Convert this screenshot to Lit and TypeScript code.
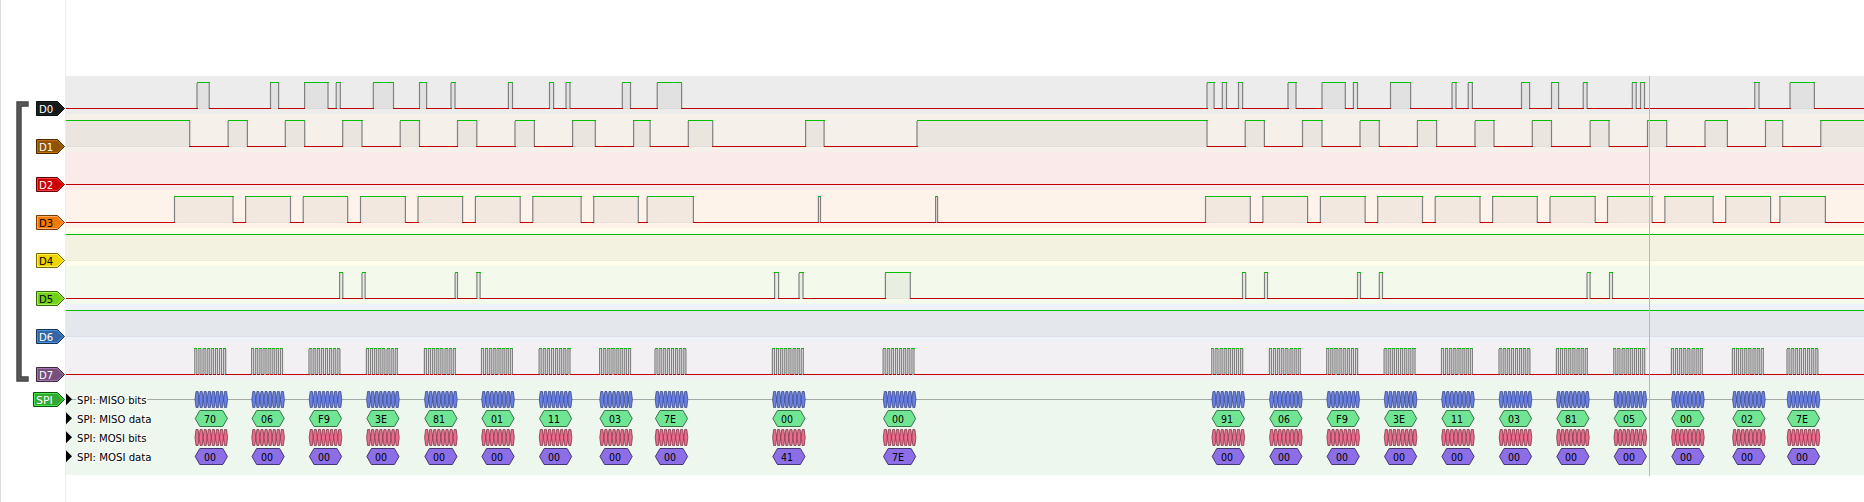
import { LitElement, html, svg, css } from "lit";
import { customElement, property } from "lit/decorators.js";

interface Channel {
  name: string;
  band: string;
  fill: string;
  edge: string;
  light: string;
  text: string;
  startsHigh: boolean;
  edges: number[];
}

const LEFT = 66;
const RIGHT = 1864;

/** Start x, MISO byte, MOSI byte of every SPI transfer. */
const TRANSFERS: [number, string, string][] = [
  [194.8, "70", "00"], [251.6, "06", "00"], [309, "F9", "00"], [366.4, "3E", "00"],
  [424.4, "81", "00"], [481.5, "01", "00"], [539.1, "11", "00"], [599.6, "03", "00"],
  [655, "7E", "00"], [772.4, "00", "41"], [883.1, "00", "7E"], [1211.8, "91", "00"],
  [1269.4, "06", "00"], [1326.7, "F9", "00"], [1384.1, "3E", "00"], [1441.5, "11", "00"],
  [1499, "03", "00"], [1556.4, "81", "00"], [1613.8, "05", "00"], [1671.4, "00", "00"],
  [1732.4, "02", "00"], [1787, "7E", "00"],
];
const BYTE = 32.6;

const clockEdges = TRANSFERS.flatMap(([s]) =>
  Array.from({ length: 16 }, (_, k) => s + k * 2.06)
);

const CHANNELS: Channel[] = [
  {
    name: "D0", band: "#ececec", fill: "#16191a", edge: "#0b0c0d", light: "#1e2324", text: "#fff", startsHigh: false,
    edges: [
      197, 209.2, 270.5, 278.6, 304.6, 328, 336.2, 340.3, 373.3, 393.5, 419.5, 426.6, 451, 455, 508.4, 512.5,
      549.5, 553.6, 566, 570, 622.3, 630.5, 657.2, 681.6, 1207, 1214.1, 1222.3, 1226.5, 1238.5, 1242.6, 1288, 1296,
      1322, 1345.3, 1353.4, 1357.5, 1390.5, 1410.6, 1452, 1456, 1468.2, 1472.4, 1521.5, 1529.6, 1551.5, 1558.6,
      1583.2, 1587.1, 1632.3, 1636.2, 1640.5, 1644.5, 1754.8, 1759, 1790, 1814.4,
    ],
  },
  {
    name: "D1", band: "#f5f0ea", fill: "#8f5202", edge: "#472901", light: "#c67103", text: "#fff", startsHigh: true,
    edges: [
      189.7, 228.1, 247.4, 285.3, 304.7, 342.7, 362, 400.2, 419.5, 457.5, 476.8, 515, 534.4, 572.6, 595.3, 633.6,
      650.1, 688.3, 712.7, 805.6, 824.1, 917, 1207, 1245.2, 1264.4, 1302.5, 1322, 1360, 1379.3, 1417.4, 1436.6,
      1475, 1494, 1532.3, 1551.5, 1590.1, 1609, 1647.5, 1666.7, 1705, 1727.4, 1765.5, 1782.7, 1820.8,
    ],
  },
  { name: "D2", band: "#fbeaea", fill: "#cc0000", edge: "#660000", light: "#ff3b3b", text: "#fff", startsHigh: false, edges: [] },
  {
    name: "D3", band: "#fef3ea", fill: "#f57900", edge: "#7a3c00", light: "#ffa95c", text: "#000", startsHigh: false,
    edges: [
      174.5, 233, 245.6, 290.5, 303.2, 347.7, 360.5, 405.4, 418, 462.6, 475.4, 520.2, 532.8, 581.1, 593.7, 638.3,
      647.1, 693.4, 818.4, 820.5, 935.6, 937.6, 1205.5, 1250.3, 1262.9, 1307.6, 1320.4, 1365.1, 1377.7, 1422.5,
      1435.2, 1480, 1492.6, 1537.3, 1550, 1595.2, 1607.5, 1652.1, 1664.9, 1713.1, 1725.7, 1770.6, 1779.9, 1825.4,
    ],
  },
  { name: "D4", band: "#fefcea", fill: "#edd400", edge: "#766a00", light: "#fff04d", text: "#000", startsHigh: true, edges: [] },
  {
    name: "D5", band: "#f3faeb", fill: "#73d216", edge: "#39690b", light: "#a5f155", text: "#000", startsHigh: false,
    edges: [
      339.6, 342.8, 362, 365.1, 455.1, 457.5, 476.9, 480.1, 774.6, 778.6, 799, 803, 885.4, 910.3, 1242.5, 1245.7,
      1264.5, 1267.5, 1357.5, 1360.5, 1379.3, 1382.5, 1587, 1590.1, 1609.5, 1612.5,
    ],
  },
  { name: "D6", band: "#eff2f7", fill: "#3465a4", edge: "#1a3252", light: "#4a8fe6", text: "#fff", startsHigh: true, edges: [] },
  { name: "D7", band: "#f3f0f3", fill: "#75507b", edge: "#3a283d", light: "#a773b0", text: "#fff", startsHigh: false, edges: clockEdges },
];

@customElement("signal-tag")
class SignalTag extends LitElement {
  static styles = css`
    :host { display: flex; justify-content: flex-end; width: 65px; height: 15px; }
    svg { display: block; overflow: visible; }
    text { font: 11px "DejaVu Sans Condensed", "DejaVu Sans", sans-serif; font-stretch: condensed; }
  `;
  @property() label = "";
  @property({ type: Number }) body = 21;
  @property() fill = "";
  @property() edge = "";
  @property() light = "";
  @property() ink = "";

  render() {
    const b = this.body;
    const w = b + 8;
    return html`<svg width=${w} height="15">
      <path d="M.5 .5H${b + 0.5}L${b + 7.5} 7.5L${b + 0.5} 14.5H.5Z" fill=${this.fill} stroke=${this.edge}></path>
      <path d="M1.5 1.5H${b + 0.1}L${b + 6.1} 7.5L${b + 0.1} 13.5H1.5Z" fill="none" stroke=${this.light}></path>
      <text x="3" y="12" fill=${this.ink} textLength=${b === 21 ? 14.2 : 16.8} lengthAdjust="spacingAndGlyphs">${this.label}</text>
    </svg>`;
  }
}

@customElement("logic-trace")
class LogicTrace extends LitElement {
  static styles = css`
    :host { display: block; height: 38px; }
    svg { display: block; }
  `;
  @property({ attribute: false }) channel!: Channel;

  render() {
    const { edges, startsHigh, band } = this.channel;
    const xs = [LEFT, ...edges, RIGHT];
    let high = "", low = "", fill = "", floor = "";
    for (let i = 0; i < xs.length - 1; i++) {
      const isHigh = (i % 2 === 0) === startsHigh;
      const a = Math.floor(xs[i]);
      const z = Math.max(a + 1, Math.floor(xs[i + 1]) + (i < xs.length - 2 ? 1 : 0));
      if (isHigh) {
        high += `M${a} 6H${z}V7H${a}Z`;
        fill += `M${xs[i]} 7H${xs[i + 1]}V33H${xs[i]}Z`;
        floor += `M${xs[i]} 32.5H${xs[i + 1]}`;
      } else low += `M${a} 32H${z}V33H${a}Z`;
    }
    return html`<svg width="1798" height="38" viewBox="66 0 1798 38">
      <rect x="66" width="1798" height="38" fill=${band}></rect>
      <path d=${fill} fill="#000" fill-opacity=".045"></path>
      <path d=${floor} stroke="#000" stroke-opacity=".03"></path>
      ${edges.map((x) => svg`<path d="M${x} 7V33" stroke="#808080" stroke-width="1.2"></path>`)}
      <path d=${low} fill="#c00000"></path>
      <path d=${high} fill="#00c000"></path>
    </svg>`;
  }
}

@customElement("decoder-trace")
class DecoderTrace extends LitElement {
  static styles = css`
    :host { display: block; height: 95px; }
    svg { display: block; }
    text { font: 11px "DejaVu Sans Condensed", "DejaVu Sans", sans-serif; font-stretch: condensed; fill: #000; }
    path { stroke-linejoin: round; }
    .label { paint-order: stroke; stroke: #f6fbf6; stroke-width: 3px; stroke-linejoin: round; }
    .byte { text-anchor: middle; }
  `;

  private hex(x0: number, x1: number, y: number) {
    const c = Math.min(4.6, (x1 - x0) / 4);
    return `M${x0} ${y}L${x0 + c} ${y - 8}H${x1 - c}L${x1} ${y}L${x1 - c} ${y + 8}H${x0 + c}Z`;
  }

  private bits(y: number, fill: string, edge: string) {
    const w = BYTE / 8;
    return TRANSFERS.map(([s]) =>
      Array.from({ length: 8 }, (_, i) =>
        svg`<path d=${this.hex(s + 0.2 + i * w, s + 0.2 + (i + 1) * w, y)} fill=${fill} stroke=${edge} stroke-width=".9" stroke-opacity=".85"></path>`
      )
    );
  }

  private bytes(y: number, col: 1 | 2, fill: string, edge: string) {
    return TRANSFERS.map((t) => svg`
      <path d=${this.hex(t[0] + 0.4, t[0] + BYTE, y)} fill=${fill} stroke=${edge}></path>
      <text class="byte" x=${Math.round(t[0] + 15)} y=${y + 4.5} textLength="12" lengthAdjust="spacingAndGlyphs">${t[col]}</text>`);
  }

  render() {
    const labels: [string, number][] = [
      ["SPI: MISO bits", 69.5], ["SPI: MISO data", 74.5], ["SPI: MOSI bits", 69.5], ["SPI: MOSI data", 74.5],
    ];
    return html`<svg width="1798" height="95" viewBox="66 0 1798 95">
      <rect x="66" width="1798" height="95" fill="#edf7ee"></rect>
      <path d="M66 19.5H1864" stroke="#a4aaa5"></path>
      ${this.bits(19.5, "#6980e8", "#38467c")}
      ${this.bytes(38.5, 1, "#70e694", "#387349")}
      ${this.bits(57.5, "#ec6a8b", "#763545")}
      ${this.bytes(76.5, 2, "#8c6fe6", "#463773")}
      ${labels.map(([t, w], i) => svg`
        <path d="M66 ${13.3 + 19 * i}L72 ${19.2 + 19 * i}L66 ${25.2 + 19 * i}Z"></path>
        <text class="label" x="77" y=${24 + 19 * i} textLength=${w} lengthAdjust="spacingAndGlyphs">${t}</text>`)}
    </svg>`;
  }
}

@customElement("app-root")
class AppRoot extends LitElement {
  static styles = css`
    :host { display: block; }
    .view {
      position: relative; box-sizing: border-box; width: 1864px; height: 502px; padding-top: 76px;
      background: linear-gradient(#dcdcdc, #dcdcdc) 0 0 / 1px 100% no-repeat,
        linear-gradient(#eeeeee, #eeeeee) 65px 0 / 1px 100% no-repeat, #fff;
      overflow: hidden;
    }
    .lane { display: grid; grid-template-columns: 66px 1798px; height: 38px; }
    .tag { padding-top: 25px; height: 0; }
    .decoder { height: 95px; }
    .decoder .tag { padding-top: 12px; }
    .bracket { position: absolute; left: 16px; top: 101px; }
    .cursor { position: absolute; left: 1649px; top: 76px; width: 1px; height: 400px; background: #b8b8b8; }
  `;

  render() {
    return html`<div class="view">
      ${CHANNELS.map((c) => html`<div class="lane">
        <div class="tag"><signal-tag label=${c.name} .fill=${c.fill} .edge=${c.edge} .light=${c.light} .ink=${c.text}></signal-tag></div>
        <logic-trace .channel=${c}></logic-trace>
      </div>`)}
      <div class="lane decoder">
        <div class="tag"><signal-tag label="SPI" .body=${24} fill="#33a833" edge="#145214" light="#45e845" ink="#fff"></signal-tag></div>
        <decoder-trace></decoder-trace>
      </div>
      <svg class="bracket" width="13" height="281" fill="none">
        <path d="M12.7 3H3V278H12.7" stroke="#404040" stroke-width="5.4"></path>
        <path d="M11.7 3H3V278H11.7" stroke="#585858" stroke-width="3"></path>
      </svg>
      <div class="cursor"></div>
    </div>`;
  }
}
